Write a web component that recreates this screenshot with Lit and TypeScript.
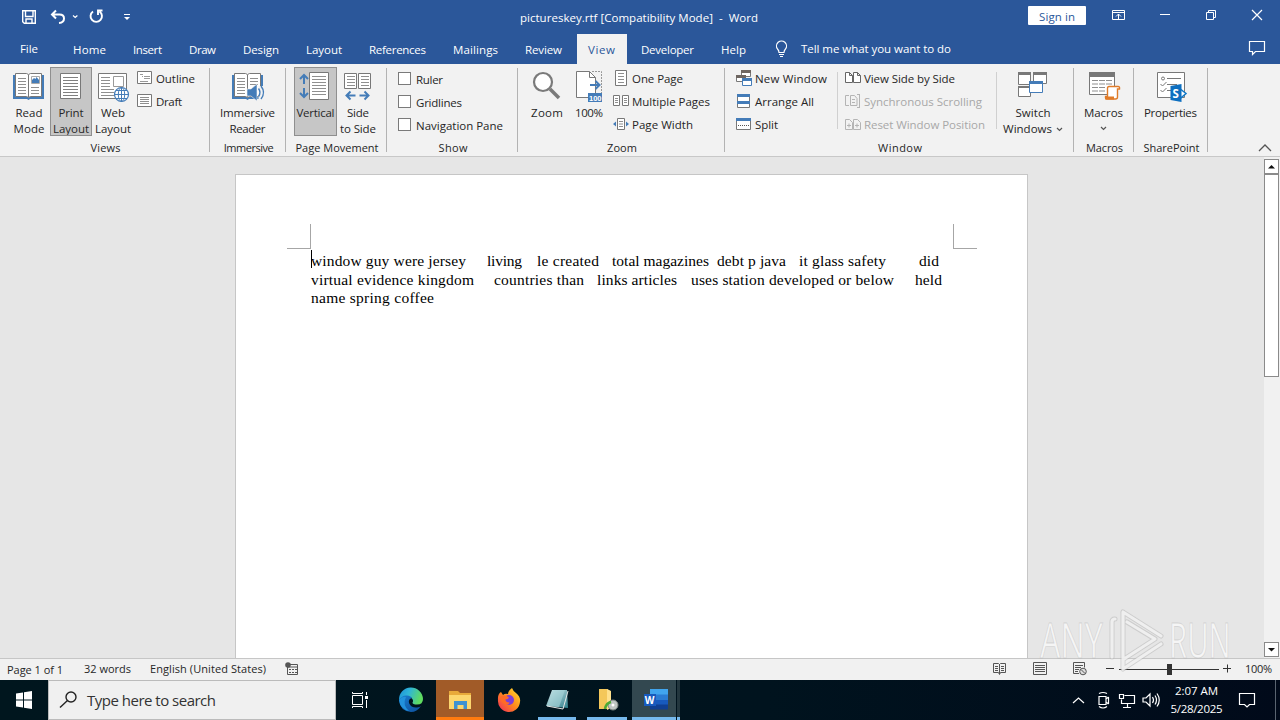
import { LitElement, html, svg, css, nothing } from "lit";
import { customElement, property } from "lit/decorators.js";

/** Text spread to an exact advance width by adjusting its tracking. */
@customElement("fit-text")
class FitText extends LitElement {
  @property() text = "";
  @property({ type: Number }) w = 0;
  static styles = css`
    :host { display: inline-block; white-space: pre; flex: none; }
  `;
  render() {
    return html`<span>${this.text}</span>`;
  }
  updated() {
    const s = this.renderRoot.querySelector("span") as HTMLElement;
    s.style.letterSpacing = "0px";
    const natural = s.getBoundingClientRect().width;
    const n = Math.max(1, this.text.length - 1);
    s.style.letterSpacing = (this.w - natural) / n + "px";
    this.style.width = this.w + "px";
  }
}

const t = (text: string, w: number) => html`<fit-text .text=${text} .w=${w}></fit-text>`;
const ic = (x: number, y: number, w: number, h: number, body: unknown) =>
  html`<svg class="ic" width=${w} height=${h} viewBox="${x} ${y} ${w} ${h}" fill="none">${body}</svg>`;

const lines = (x: number, y: number, w: number, n: number, step: number, c = "#8f8f8f") => {
  let d = "";
  for (let i = 0; i < n; i++) d += `M${x} ${y + i * step}h${w}`;
  return svg`<path d=${d} stroke=${c} stroke-width="1"/>`;
};
const G = "#787878";
const B = "#447cb8";

const book = (dx: number) => svg`<g transform="translate(${dx} 0)">
  <path d="M13 75h31v24h-14l-1.500 1-1.500-1h-14z" fill="${B}"/>
  <path d="M15.500 73.500h11l2 1 2-1h11v23h-11l-2 1-2-1h-11z" fill="#fff" stroke="${G}"/>
  <path d="M28.500 75v22" stroke="${G}"/>
  ${lines(18, 78.5, 8, 6, 3)}</g>`;

const icons = {
  read: svg`${book(0)}<path d="M31.500 76.500h8v7h-8z" fill="#fff" stroke="#aaa"/><path d="M32 83v-3l2-2 1.500 1 1-2 2.500 3v3z" fill="${B}"/>${lines(31, 87.5, 8, 3, 3)}`,
  print: svg`<path d="M60.500 73.500h20v25h-20z" fill="#fff" stroke="${G}"/>${lines(63, 77.5, 15, 7, 3, "#808080")}`,
  web: svg`<path d="M98.500 73.500h28v25h-28z" fill="#fff" stroke="${G}"/>${lines(101, 77.5, 9, 4, 3)}${lines(101, 89.5, 13, 3, 3)}
    <path d="M113.500 76.500h10v10h-10z" fill="#fff" stroke="#999"/>
    <circle cx="121.500" cy="94.500" r="7" fill="#fff" stroke="${B}" stroke-width="1.200"/>
    <ellipse cx="121.500" cy="94.500" rx="3.200" ry="7" stroke="${B}"/><path d="M114.500 94.500h14M121.500 87.500v14M116 90.500h11M116 98.500h11" stroke="${B}"/>`,
  outline: svg`<path d="M137.500 71.500h14v12h-14z" fill="#fff" stroke="${G}"/><path d="M140 74.500h3M144 76.500h6M144 78.500h6M140 81.500h8M142 76.500h1" stroke="#999"/>`,
  draft: svg`<path d="M137.500 94.500h14v12h-14z" fill="#fff" stroke="${G}"/>${lines(140, 97.5, 9, 4, 2)}`,
  immersive: svg`${book(219)}${lines(250, 78.5, 8, 3, 3)}<path d="M247 89h4l6-5v17l-6-5h-4z" fill="${B}" stroke="#f2f2f2" stroke-width=".6"/>
    <path d="M258.500 86v14h6v-14z" fill="#f2f2f2"/><path d="M258.500 88.500q3 4 0 8M261 86q5 6.500 0 13" stroke="${B}" stroke-width="1.400"/>`,
  vertical: svg`<path d="M309.500 72.500h19v27h-19z" fill="#fff" stroke="${G}"/>${lines(312, 76.5, 14, 7, 3)}
    <path d="M304 75v9M304 88v9M300 79l4-4 4 4M300 93l4 4 4-4" stroke="${B}" stroke-width="2"/>`,
  side: svg`<path d="M344.500 73.500h12v15h-12zM358.500 73.500h12v15h-12z" fill="#fff" stroke="${G}"/>${lines(347, 76.5, 8, 4, 3)}${lines(361, 76.5, 8, 4, 3)}
    <path d="M346.500 95.500h9M359.500 95.500h9M350.500 91.500l-4 4 4 4M364.500 91.500l4 4-4 4" stroke="${B}" stroke-width="2"/>`,
  zoom: svg`<circle cx="543" cy="82" r="9" fill="#fff" stroke="#7a7a7a" stroke-width="2.200"/><path d="M550 89l9 9" stroke="#7a7a7a" stroke-width="3.500"/>`,
  hundred: svg`<path d="M576.500 71.500h13l6 6v20h-19z" fill="#fff" stroke="${G}"/><path d="M589.500 71.500v6h6" stroke="${G}"/>
    <path d="M592 71.500h9.500v22" stroke="#999" stroke-dasharray="2 1"/><path d="M590 85h9M595.500 81l4 4-4 4" stroke="${B}" stroke-width="2"/>
    <path d="M588 93h14v9h-14z" fill="${B}"/><text x="589" y="100.500" font-size="7.500" font-weight="700" fill="#fff" font-family="Liberation Sans">100</text>`,
  one: svg`<path d="M615.500 70.500h11v15h-11z" fill="#fff" stroke="${G}"/>${lines(618, 73.5, 6, 4, 3)}`,
  multi: svg`<path d="M613.500 95.500h6v10h-6zM622.500 95.500h6v10h-6z" fill="#fff" stroke="${G}"/>${lines(615, 98.5, 3, 3, 2)}${lines(624, 98.5, 3, 3, 2)}`,
  pagew: svg`<path d="M617.500 118.500h7v11h-7z" fill="#fff" stroke="${G}"/>${lines(619, 121.5, 4, 3, 2.5)}<path d="M613 124l3-2.500v5zM629 124l-3-2.500v5z" fill="${B}"/>`,
  neww: svg`<path d="M741.500 71.500h9v5h-9zM736.500 76.500h9v5h-9z" fill="#fff" stroke="${G}"/><path d="M741 70h10v3h-10zM736 75h10v3h-10z" fill="#6e6661"/>
    <path d="M742.500 79.500h9v6h-9z" fill="#fff" stroke="${B}"/><path d="M742 78h10v3h-10z" fill="${B}"/>`,
  arrange: svg`<path d="M737.500 94.500h12v13h-12z" fill="#fff" stroke="${G}"/><path d="M737 94h13v3h-13zM737 101h13v3h-13z" fill="${B}"/>`,
  split: svg`<path d="M736.500 118.500h14v11h-14z" fill="#fff" stroke="${G}"/><path d="M736 118h15v3h-15z" fill="${B}"/><path d="M738 125.500h12" stroke="#555" stroke-dasharray="1 1"/>`,
  vside: svg`<path d="M845.500 72.500h4l3 3v7h-7zM853.500 72.500h4l3 3v7h-7zM849.500 72.500v3h3M857.500 72.500v3h3" fill="#fff" stroke="#666"/>`,
  sync: svg`<path d="M849 95.500h-3.500v10h3.500M850.500 95.500h4l2.500 3v7h-6.500zM857 94.500h3M859.500 94v13M857 107.500h3M852 99.500h3M852 102.500h3" stroke="#b4b4b4"/>`,
  reset: svg`<path d="M845.500 119.500h4l3 3v7h-7zM853.500 119.500h4l3 3v7h-7zM847 125.500h4M855 125.500h4M849 123.500v4M857 123.500v4" stroke="#b4b4b4"/>`,
  switchw: svg`<path d="M1018.500 73.500h12v11h-12zM1033.500 73.500h13v10h-13zM1018.500 86.500h12v10h-12z" fill="#fff" stroke="${G}"/>
    <path d="M1018 72h13v3h-13zM1033 72h14v3h-14zM1018 86h13v2h-13z" fill="${G}"/>
    <path d="M1029.500 81.500h13v11h-13z" fill="#fff" stroke="${B}"/><path d="M1029 81h14v3h-14z" fill="${B}"/>`,
  macros: svg`<path d="M1089.500 73.500h25v21h-25z" fill="#fff" stroke="${G}"/><path d="M1089 72h26v5h-26z" fill="${G}"/>${lines(1092, 80.5, 6, 4, 3.5)}${lines(1099, 80.5, 6, 4, 3.5)}${lines(1106, 80.5, 6, 2, 3.5)}
    <path d="M1109 86.500h9q2 0 1.500 2.500h-2v8q0 2-2 2h-9q-1.500-1-1-2.500h2v-8q0-2 1.500-2z" fill="#fff" stroke="#e07b28" stroke-width="1.400"/><path d="M1105 96.500h9v3h-9z" fill="#e07b28"/>`,
  props: svg`<path d="M1157.500 72.500h27v25h-27z" fill="#fff" stroke="${G}"/><circle cx="1163" cy="78.500" r="1.500" stroke="${G}"/><path d="M1167 78.500h14M1167 84.500h10M1160.500 84l2 2 4-4M1160.500 90l2 2 4-4M1167 90.500h4" stroke="${G}"/>
    <path d="M1179 88l7 5.500-7 6z" fill="#fff" stroke="#0f78c8" stroke-width="1.500"/><path d="M1170.500 86l11-2v18l-11-2z" fill="#0d6fc0"/><text x="1172.500" y="97.500" font-size="11.500" font-weight="700" fill="#fff">S</text>`,
};

type Small = [unknown, string, number, boolean?];

@customElement("app-root")
class AppRoot extends LitElement {
  static styles = css`
    :host {
      display: grid; grid-template-rows: 34px 30px 93px 501px 22px 40px;
      position: relative; width: 1280px; height: 720px; overflow: hidden;
      font: 11.5px/16px "Open Sans", "Noto Sans", sans-serif; color: #262626; background: #e6e6e6;
    }
    * { box-sizing: border-box; }
    .ic { display: block; flex: none; }
    .title { background: #2b579a; color: #fff; display: flex; }
    .title .name { padding: 10px 0 0 378px; width: 886px; }
    .signin { margin: 6px 0 0 0; width: 58px; height: 19px; background: #fff; color: #2b579a; padding: 3px 11px; border-radius: 1px; }
    .tabs { background: #2b579a; color: #fff; display: flex; gap: 3px; padding-left: 8px; }
    .tab { padding: 8px 12px 0; height: 30px; flex: none; }
    .tab:first-child { margin-right: 8px; padding-top: 7px; }
    .tab.on { background: #f2f2f2; color: #2b579a; padding: 8px 12px 0 11px; margin-right: -1px; }
    .tell { padding: 7px 0 0 10px; width: 440px; }
    .ribbon { background: #f2f2f2; display: flex; border-bottom: 1px solid #c8c8c8; }
    .group { display: flex; flex-direction: column; position: relative; flex: none; padding-top: 3px; }
    .group::after { content: ""; position: absolute; right: 0; top: 4px; bottom: 4px; width: 1px; background: #b3b3b3; }
    .items { display: flex; height: 69px; }
    .label { text-align: center; font-size: 11px; padding: 4px 0 0 1px; }
    .big { display: flex; flex-direction: column; align-items: center; flex: none; }
    .big.on { background: #c6c6c6; outline: 1px solid #8f8f8f; outline-offset: -1px; }
    .line { display: flex; align-items: center; gap: 4px; height: 16px; }
    .row { display: flex; align-items: center; height: 23px; }
    .row.off { color: #a8a8a8; }
    .box { width: 13px; height: 13px; border: 1px solid #7a7a7a; background: #fff; margin: 0 5px 0 0; }
    .show .row { align-items: flex-start; padding-top: 5px; }
    .vsep { width: 1px; height: 57px; background: #d0d0d0; margin-top: 5px; }
    .collapse { margin: 76px 0 0 49px; }
    .doc { display: flex; }
    .page { margin: 17px 236px 0 235px; width: 793px; background: #fff; border: 1px solid #c6c6c6; border-bottom: 0; padding: 49px 50px 0 51px; }
    .marks { display: flex; justify-content: space-between; height: 25px; }
    .mark { width: 24px; height: 25px; border: 0 solid #a6a6a6; border-bottom-width: 1px; }
    .mark.l { border-right-width: 1px; } .mark.r { border-left-width: 1px; }
    .body { padding: 3px 0 0 24px; font: 15.500px/18.600px "Liberation Serif", serif; color: #000; position: relative; }
    .caret { position: absolute; left: 24px; top: 1px; width: 1px; height: 18px; background: #000; }
    .para { display: flex; }
    .scroll { width: 16px; background: #f1f1f1; padding-top: 2px; display: flex; flex-direction: column; }
    .sbtn { width: 15px; height: 15px; border: 1px solid #8a8a8a; background: #fff; flex: none; }
    .thumb { width: 15px; height: 203px; border: 1px solid #8a8a8a; background: #fff; margin-bottom: 265px; }
    .status { background: #f1f1f1; border-top: 1px solid #c6c6c6; display: flex; font-size: 11px; padding: 2px 0 0 7px; }
    .status .pg { padding-top: 1px; }
    .task { display: flex; background: linear-gradient(90deg, #00161e, #00131e 60%, #010a1a); color: #fff; }
    .search { width: 288px; background: #f0f0f0; color: #333; border: 1px solid #bbb; display: flex; font: 15px/20px "Open Sans", sans-serif; }
    .search fit-text { padding-top: 9px; }
    .clock { width: 53px; display: flex; flex-direction: column; align-items: center; line-height: 18px; padding-top: 2px; }
    .wm { position: absolute; left: 1030px; top: 600px; pointer-events: none; }
  `;

  big(x: number, w: number, icon: unknown, l: [string, number][], on = false, drop = 0) {
    const chev = html`<svg class="ic" width="7" height="5" viewBox="0 0 7 5" fill="none"><path d="M1 1l2.500 2.500L6 1" stroke="#555" stroke-width="1.200"/></svg>`;
    return html`<div class="big ${on ? "on" : ""}" style="width:${w}px">
      ${ic(x, 67, w, 38, icon)}
      ${l.map(([s, n], i) => html`<div class="line">${t(s, n)}${drop === 1 && i === 1 ? chev : nothing}</div>`)}
      ${drop === 2 ? html`<div class="line">${chev}</div>` : nothing}
    </div>`;
  }
  list(x: number, w: number, rows: Small[]) {
    return html`<div>${rows.map(([i, s, n, off], k) => html`<div class="row ${off ? "off" : ""}">${ic(x, 67 + 23 * k, w, 23, i)}${t(s, n)}</div>`)}</div>`;
  }
  group(w: number, pad: number, label: string, lw: number, body: unknown, cls = "") {
    return html`<div class="group ${cls}" style="width:${w}px"><div class="items" style="padding-left:${pad}px">${body}</div><div class="label">${t(label, lw)}</div></div>`;
  }
  para(segs: [number, number, string][]) {
    let pos = 311;
    return html`<div class="para">${segs.map(([a, b, s]) => {
      const gap = a - pos;
      pos = b;
      return html`<span style="margin-left:${gap}px">${t(s, b - a)}</span>`;
    })}</div>`;
  }

  render() {
    const tabs: [string, number][] = [["File", 18], ["Home", 33], ["Insert", 29], ["Draw", 27], ["Design", 36], ["Layout", 36], ["References", 57], ["Mailings", 45], ["Review", 37], ["View", 27], ["Developer", 53], ["Help", 25]];
    return html`
      <div class="title">
        ${ic(0, 0, 142, 34, svg`<g stroke="#fff" stroke-width="1.400">
          <path d="M22.700 10.700h12.600v12.600h-11l-1.600-1.600zM25.500 11v5.500h7.500V11M26 23v-4h6v4"/>
          <path d="M56 10.500l-4 4 4 4M52.500 14.500h7q4.500 0 4.500 4t-5 4.500" stroke-width="2"/>
          <path d="M73 15.500l2.200 2 2.200-2" stroke-width="1.200"/>
          <path d="M93 11.500a5.700 5.700 0 1 0 6.500 0M98 15v-4.500h4.500" stroke-width="1.900"/></g>
          <path d="M124 14.500h6" stroke="#fff"/><path d="M124 17h6l-3 3z" fill="#fff"/>`)}
        <div class="name">${t("pictureskey.rtf [Compatibility Mode]  -  Word", 238)}</div>
        <div class="signin">${t("Sign in", 36)}</div>
        ${ic(1086, 0, 194, 34, svg`<g stroke="#fff"><path d="M1112.500 10.500h12v9h-12zM1112.500 12.500h12M1118.500 19v-5M1116 16.500l2.500-2.500 2.500 2.500M1160 14.500h10M1206.500 12.500h7v7h-7z"/>
          <path d="M1208.500 12v-1.500h7v7H1214"/><path d="M1252 10l10 10M1262 10l-10 10" stroke-width="1.200"/></g>`)}
      </div>
      <div class="tabs">
        ${tabs.map(([s, w]) => html`<div class="tab ${s === "View" ? "on" : ""}">${t(s, w)}</div>`)}
        ${ic(761, 34, 27, 30, svg`<g stroke="#fff" stroke-width="1.200"><path d="M779 52.500q0-2-1.500-3.500a5 5 0 1 1 8 0q-1.500 1.500-1.500 3.500z"/><path d="M779 54.500h5M780 56.500h3"/></g>`)}
        <div class="tell">${t("Tell me what you want to do", 150)}</div>
        ${ic(1234, 34, 40, 30, svg`<path d="M1249.500 41.500h15v10h-9l-3 3v-3h-3z" stroke="#fff" stroke-width="1.200"/>`)}
      </div>
      <div class="ribbon">
        ${this.group(210, 8, "Views", 30, html`
          ${this.big(8, 42, icons.read, [["Read", 27], ["Mode", 31]])}
          ${this.big(50, 42, icons.print, [["Print", 25], ["Layout", 36]], true)}
          ${this.big(92, 42, icons.web, [["Web", 24], ["Layout", 36]])}
          ${this.list(134, 22, [[icons.outline, "Outline", 39], [icons.draft, "Draft", 26]])}`)}
        ${this.group(76, 0, "Immersive", 50, this.big(210, 75, icons.immersive, [["Immersive", 55], ["Reader", 36]]))}
        ${this.group(101, 8, "Page Movement", 83, html`
          ${this.big(294, 43, icons.vertical, [["Vertical", 38]], true)}
          ${this.big(337, 42, icons.side, [["Side", 22], ["to Side", 36]])}`)}
        ${this.group(131, 11, "Show", 29, html`<div>${([["Ruler", 27], ["Gridlines", 46], ["Navigation Pane", 87]] as [string, number][]).map(([s, w]) => html`<div class="row"><span class="box"></span>${t(s, w)}</div>`)}</div>`, "show")}
        ${this.group(207, 8, "Zoom", 30, html`
          ${this.big(526, 42, icons.zoom, [["Zoom", 32]])}
          ${this.big(568, 42, icons.hundred, [["100%", 28]])}
          ${this.list(610, 22, [[icons.one, "One Page", 51], [icons.multi, "Multiple Pages", 78], [icons.pagew, "Page Width", 61]])}`)}
        ${this.group(349, 8, "Window", 44, html`
          ${this.list(733, 22, [[icons.neww, "New Window", 72], [icons.arrange, "Arrange All", 59], [icons.split, "Split", 23]])}
          <div class="vsep" style="margin-left:10px"></div>
          ${this.list(838, 26, [[icons.vside, "View Side by Side", 91], [icons.sync, "Synchronous Scrolling", 118, true], [icons.reset, "Reset Window Position", 121, true]])}
          <div class="vsep" style="margin-left:11px"></div>
          ${this.big(997, 72, icons.switchw, [["Switch", 35], ["Windows", 49]], false, 1)}`)}
        ${this.group(60, 0, "Macros", 37, this.big(1074, 59, icons.macros, [["Macros", 39]], false, 2))}
        ${this.group(74, 0, "SharePoint", 56, this.big(1134, 73, icons.props, [["Properties", 53]]))}
        <div class="collapse">${ic(0, 0, 16, 16, svg`<path d="M2 11l6-6 6 6" stroke="#555" stroke-width="1.300"/>`)}</div>
      </div>
      <div class="doc">
        <div class="page">
          <div class="marks"><div class="mark l"></div><div class="mark r"></div></div>
          <div class="body"><div class="caret"></div>
            ${this.para([[311, 466, "window guy were jersey"], [487, 522, "living"], [537, 599, "le created"], [612, 709, "total magazines"], [717, 786, "debt p java"], [799, 886, "it glass safety"], [919, 939, "did"]])}
            ${this.para([[311, 474, "virtual evidence kingdom"], [494, 584, "countries than"], [597, 677, "links articles"], [691, 894, "uses station developed or below"], [915, 942, "held"]])}
            ${this.para([[311, 434, "name spring coffee"]])}
          </div>
        </div>
        <div class="scroll">
          <div class="sbtn">${ic(0, 0, 13, 13, svg`<path d="M3 8.500h7L6.500 5z" fill="#111"/>`)}</div>
          <div class="thumb"></div>
          <div class="sbtn">${ic(0, 0, 13, 13, svg`<path d="M3 5h7L6.500 8.500z" fill="#111"/>`)}</div>
        </div>
      </div>
      <div class="status">
        <span class="pg">${t("Page 1 of 1", 56)}</span><span style="margin-left:21px">${t("32 words", 47)}</span><span style="margin-left:19px">${t("English (United States)", 116)}</span>
        ${ic(266, 661, 979, 19, svg`
          <path d="M287.500 664.500h10v10h-10zM287.500 667h10" stroke="#555"/><path d="M289 669.500h8M289 672.500h8" stroke="#555" stroke-dasharray="2 1"/><circle cx="288" cy="665" r="2.800" fill="#555"/>
          <g stroke="#555"><path d="M993.500 663.500h5l1 1 1-1h5v9h-5l-1 2-1-2h-5zM999.500 664v10M995 666.500h3M995 668.500h3M995 670.500h3M1001 666.500h3M1001 668.500h3M1001 670.500h3"/>
          <path d="M1033.500 662.500h13v12h-13zM1035 665.500h10M1035 667.500h10M1035 669.500h10M1035 671.500h10"/>
          <path d="M1079 673.500h-5.500v-11h11v5M1075 665.500h8M1075 667.500h6M1075 669.500h4M1075 671.500h3"/><circle cx="1083" cy="671.500" r="3.300" fill="#ddd"/><path d="M1081 669.500l4 4"/></g>
          <path d="M1106 668.500h8M1119 669.500h100M1223 668.500h8M1227.500 664.500v8" stroke="#333"/><path d="M1167 664h5v11h-5z" fill="#333"/>`)}
        ${t("100%", 27)}
      </div>
      <div class="task">
        ${ic(0, 680, 48, 40, svg`<path d="M16 693.500l7-1v7h-7zM24 692.300l8-1.200v8.400h-8zM16 700.500h7v7l-7-1zM24 700.500h8v8.400l-8-1.200z" fill="#fff"/>`)}
        <div class="search">${ic(49, 681, 38, 38, svg`<circle cx="71" cy="697" r="5" stroke="#222" stroke-width="1.400"/><path d="M67.500 700.500l-7.500 7" stroke="#222" stroke-width="1.400"/>`)}${t("Type here to search", 129)}</div>
        ${ic(336, 680, 834, 40, svg`
          <defs>
            <linearGradient id="e1" x1="0" y1="0" x2="1" y2=".3"><stop offset="0" stop-color="#1b8fd8"/><stop offset=".45" stop-color="#2fb5d8"/><stop offset="1" stop-color="#5fdc60"/></linearGradient>
            <linearGradient id="e2" x1="0" y1="0" x2="1" y2="1"><stop offset="0" stop-color="#1a7fd0"/><stop offset="1" stop-color="#0d4f9c"/></linearGradient>
            <linearGradient id="f1" x1="1" y1="0" x2="0" y2="1"><stop offset="0" stop-color="#ffe32e"/><stop offset=".5" stop-color="#ff8a1c"/><stop offset="1" stop-color="#f0255f"/></linearGradient>
            <linearGradient id="n1" x1="0" y1="0" x2="1" y2="1"><stop offset="0" stop-color="#d9eef0"/><stop offset="1" stop-color="#2f7f8c"/></linearGradient>
          </defs>
          <g stroke="#fff"><path d="M352.500 695.500h10v9h-10zM352.500 692v1.500h10V692M352.500 708v-1.500h10v1.500M366.500 692v3M366.500 700v8"/></g><path d="M365 696h3v3h-3z" fill="#fff"/>
          <path d="M399 700a12 12 0 0 1 24-1q0 5.500-6 5.500-4.500 0-4.500-2 1.500-2-1-4.500-5-4-12.500 2z" fill="url(#e1)"/>
          <path d="M399 700q3-5 8-4.500 4 .5 5 2.500-4 1-3 5 2 5 8 4.500 3-.5 4-1.500-4 6-10 6-11-1-12-12z" fill="url(#e2)"/>
          <path d="M406 697q-4 8 3 14-9-2-10-11 3-4 7-3z" fill="#2292dc"/>
          <path d="M436 680h48v40h-48z" fill="#a15b28"/><path d="M436 717h48v3h-48z" fill="#ff7b0f"/>
          <path d="M449 691h9l2 2h11v16h-22z" fill="#e8a93a"/><path d="M449 695h22v14h-22z" fill="#fcd66e"/><path d="M454 709v-8h13v8h-3.500v-4h-6v4z" fill="#3f92d2"/>
          <path d="M498 700q-.5-6 3-8l2 3q2-2 5-1 0-3 4-6 1 3 4 5 5 4 4 9a11 11 0 0 1-22-2z" fill="url(#f1)"/>
          <circle cx="509" cy="700" r="5" fill="#7d3ed6"/><path d="M500 697q5-3 9 .5-1 2-3.500 2 0 3 4 3-1 3-4 2-5-2-5.500-7.500z" fill="#ff6b26"/>
          <path d="M552 690h15l1 18-22-2z" fill="url(#n1)"/><path d="M553 690h12l-6 17-12-1z" fill="#a9d6da" opacity=".6"/><path d="M547 706l16 3 5-18" stroke="#e6e6e6"/>
          <path d="M599 689h8l3 2v18h-11z" fill="#f4c75a"/><path d="M607 689l4 2v17l-4 2z" fill="#ffe08c"/><circle cx="613" cy="705" r="5" fill="#bfc6c4" stroke="#7b8583"/><circle cx="613" cy="705" r="1.500" fill="#fff"/><path d="M605 709q1-6 6-7" stroke="#4caa35" stroke-width="2.500"/>
          <path d="M632 680h44v40h-44z" fill="#334850"/><path d="M677 680h3v40h-3z" fill="#23363e"/>
          <path d="M650 689h18v6h-18z" fill="#41a5ee"/><path d="M650 694.500h18v5.500h-18z" fill="#2b7cd3"/><path d="M650 700h18v5h-18z" fill="#185abd"/><path d="M650 704.500h18v5h-18z" fill="#103f91"/><path d="M644 694h12v12h-12z" fill="#185abd"/>
          <text x="644.800" y="703.700" font-size="10" font-weight="700" fill="#fff">W</text>
          <path d="M538 718.500h38M587 718.500h40M632 718.500h44M677 718.500h3" stroke="#76b9ed" stroke-width="3"/>
          <g stroke="#fff" stroke-width="1.200"><path d="M1073 703l5.500-5 5.500 5"/><path d="M1099 696.500h7v8h-7zM1108.500 697v7M1106 699l2.500-2M1106 702l2.500 2M1099 693.500q4-2 8 0M1099 706.500q4 3 8 0"/>
          <path d="M1119.500 694.500h4v4h-4zM1124.500 695.500h10v8h-13v-4M1127.500 704v3M1123 707.500h8"/>
          <path d="M1143 698h3l4-4v12l-4-4h-3zM1152.500 697q2 3 0 6M1155 695.500q3 4.500 0 9M1157 693.500q4.500 6.500 0 13"/></g>`)}
        <div class="clock">${t("2:07 AM", 43)}${t("5/28/2025", 52)}</div>
        ${ic(1223, 680, 57, 40, svg`<path d="M1239.500 693.500h15v11h-5l-2.500 2.500-2.500-2.500h-5z" stroke="#fff" stroke-width="1.200"/><path d="M1275.500 680v40" stroke="#5a6470"/>`)}
      </div>
      <svg class="wm" width="213" height="80" viewBox="1030 600 213 80" fill="none">
        <g font-family="Open Sans" font-weight="400" font-size="49" fill="#f8f8f8" fill-opacity=".85" stroke="#b4b4b4" stroke-opacity=".45" stroke-width=".9">
          <text transform="translate(1040 658) scale(.66 1)">ANY</text>
          <text transform="translate(1169 658) scale(.6 1)">RUN</text>
        </g>
        <g stroke-linejoin="round" stroke-linecap="round">
          <path d="M1123 612v46M1112 657v-35q0-3 3-3M1123 612l38 24M1127 622l28 17-31 20M1161 644l-38 25v-10" stroke="#b4b4b4" stroke-opacity=".5" stroke-width="5"/>
          <path d="M1123 612v46M1112 657v-35q0-3 3-3M1123 612l38 24M1127 622l28 17-31 20M1161 644l-38 25v-10" stroke="#f5f5f5" stroke-opacity=".85" stroke-width="3.200"/>
        </g>
      </svg>`;
  }
}
